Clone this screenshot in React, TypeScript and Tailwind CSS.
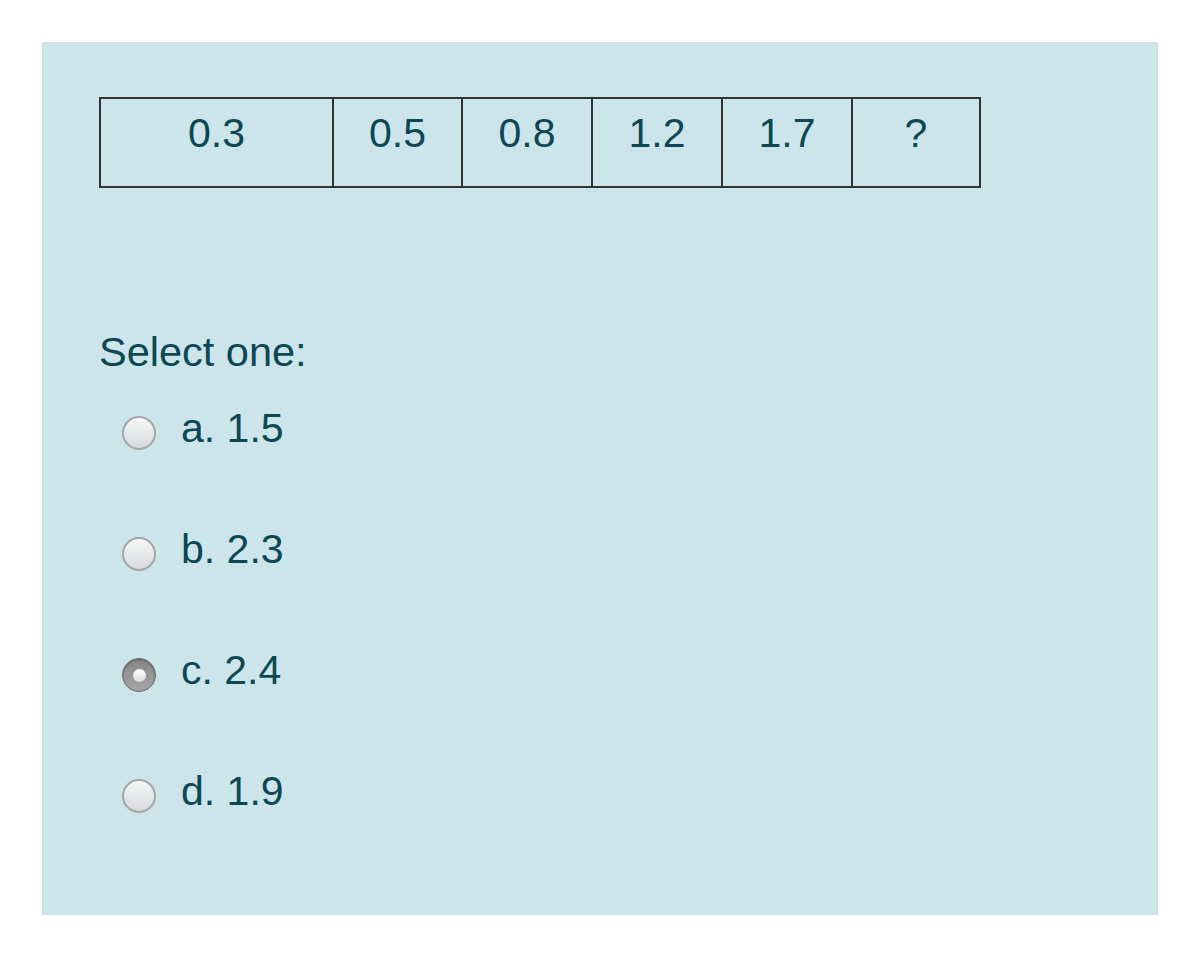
const values = ["0.3", "0.5", "0.8", "1.2", "1.7", "?"];
const widths = ["w-[233px]", "w-[129px]", "w-[130px]", "w-[130px]", "w-[130px]", "w-[128px]"];

const options = [
  { key: "a", label: "a. 1.5", checked: false },
  { key: "b", label: "b. 2.3", checked: false },
  { key: "c", label: "c. 2.4", checked: true },
  { key: "d", label: "d. 1.9", checked: false },
];

function Radio({ checked }: { checked: boolean }) {
  if (checked) {
    return (
      <span className="flex h-[34px] w-[34px] items-center justify-center rounded-full border border-[#6f6f6f] bg-gradient-to-b from-[#878787] to-[#a4a4a4] shadow-[inset_0_1px_2px_rgba(0,0,0,0.35)]">
        <span className="block h-[13px] w-[13px] rounded-full bg-gradient-to-b from-[#ffffff] to-[#d9dcdd]" />
      </span>
    );
  }
  return (
    <span className="block h-[34px] w-[34px] rounded-full border-2 border-[#a3a7a8] bg-gradient-to-b from-[#f6f7f7] to-[#d5dadb]" />
  );
}

export default function App() {
  return (
    <div className="min-h-[957px] bg-white pt-[42px] pl-[42px] font-['Liberation_Sans',Arial,sans-serif] text-[#0b4852]">
      <div className="h-[873px] w-[1116px] bg-[#cce5ea] pl-[57px] pt-[55px]">
        {/* sequence table */}
        <table className="border-collapse">
          <tbody>
            <tr>
              {values.map((v, i) => (
                <td
                  key={i}
                  className={`${widths[i]} h-[89px] border-2 border-[#333333] pt-[10px] text-center align-top text-[41px] leading-[48px]`}
                >
                  {v}
                </td>
              ))}
            </tr>
          </tbody>
        </table>

        <p className="mt-[140px] text-[41.5px] leading-[48px]">Select one:</p>

        <div className="mt-[28px] flex flex-col gap-[73px]">
          {options.map((o) => (
            <label key={o.key} className="flex h-[48px] items-center pl-[23px]">
              <span className="mt-[10px] block">
                <Radio checked={o.checked} />
              </span>
              <span className="ml-[25px] text-[41px] leading-[48px]">{o.label}</span>
            </label>
          ))}
        </div>
      </div>
    </div>
  );
}
